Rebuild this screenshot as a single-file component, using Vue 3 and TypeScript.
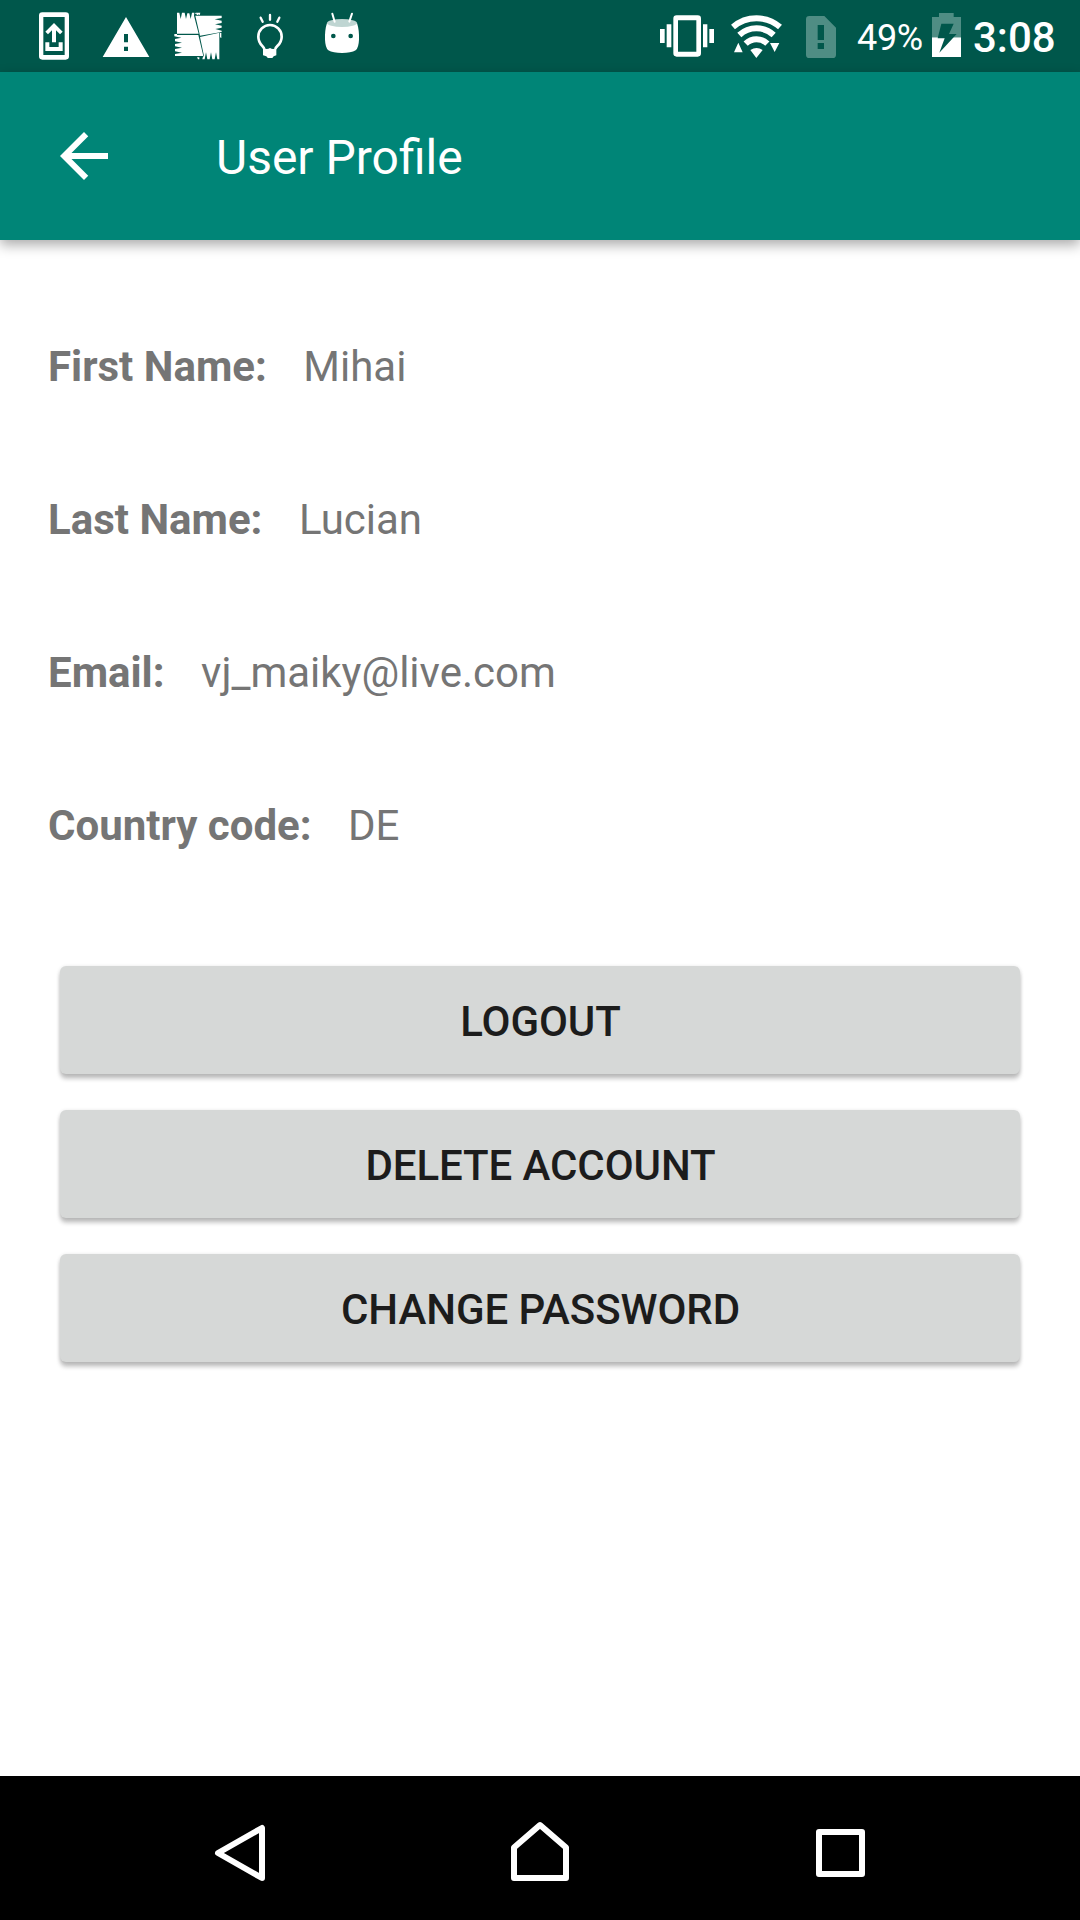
<script setup lang="ts">
interface Field {
  label: string
  value: string
}

const fields: Field[] = [
  { label: 'First Name:', value: 'Mihai' },
  { label: 'Last Name:', value: 'Lucian' },
  { label: 'Email:', value: 'vj_maiky@live.com' },
  { label: 'Country code:', value: 'DE' },
]

const actions: string[] = ['Logout', 'Delete account', 'Change password']
</script>

<template>
  <div class="screen">
    <div class="status">
      <div class="notifications">
        <!-- system update -->
        <svg width="72" height="72" viewBox="-6 0 216 216">
          <path fill="#fff" fill-rule="evenodd" d="M67 37H137Q147 37 147 47V169Q147 179 137 179H67Q57 179 57 169V47Q57 37 67 37ZM70 51V165H134V51Z" />
          <path fill="#fff" d="M102 69L128 95L120 103L108 91V127H96V91L84 103L76 95ZM76 127H88V141H116V127H128V153H76Z" />
        </svg>
        <!-- warning -->
        <svg width="72" height="72" viewBox="210 0 216 216">
          <path fill="#fff" fill-rule="evenodd" d="M318 51L388 171H248ZM312 102V127H324V102ZM312 140V153H324V140Z" />
        </svg>
        <!-- antivirus -->
        <svg width="72" height="72" viewBox="6 0 216 216">
          <g fill="#fff">
            <path d="M51 38H58L62 57L66 38H74L78 57L82 40H88L92 57L96 38H103L102 47L116 101H51Z" />
            <path d="M106 47H185V54L164 58L185 62V69L165 73L185 77V83L166 87L185 92V96L120 107ZM180 99H184V114L180 112ZM105 42L107 38H121L119 45H116V42L113 45H110V41Z" />
            <path d="M43 102H51V105H115L130 168H45V162L66 158L45 154V147L66 143L45 139V132L66 128L45 124V117L64 113L43 109Z" />
            <path d="M120 111L178 98V178H172L168 157L164 178H157L153 157L149 178H142L138 157L134 178H127L129 170L132 168ZM111 172H118V178H114Z" />
          </g>
        </svg>
        <!-- light bulb -->
        <svg width="72" height="72" viewBox="222 0 216 216">
          <path fill="none" stroke="#fff" stroke-width="8" d="M313 147C311 137 295 134 295 110A35 35 0 0 1 365 110C365 134 348 137 346 147" />
          <path fill="#fff" d="M309 143Q320 150 330 144Q340 150 349 143V166Q339 168 337 174H323Q321 168 309 166Z" />
          <path fill="none" stroke="#fff" stroke-width="7" stroke-linecap="round" d="M330 45V59M302 53L308 65M358 53L352 65" />
        </svg>
        <!-- android head -->
        <svg width="72" height="72" viewBox="438 0 216 216">
          <path fill="#fff" fill-rule="evenodd" d="M501 69Q546 88 591 69Q598 90 597 119Q596 143 587 151Q573 159 546 159Q519 159 505 151Q496 143 495 119Q494 90 501 69ZM513 108a7 7 0 1 0 14 0a7 7 0 1 0-14 0M565 108a7 7 0 1 0 14 0a7 7 0 1 0-14 0" />
          <ellipse cx="546" cy="69" rx="45" ry="12" fill="#bfd5d2" />
          <path fill="none" stroke="#fff" stroke-width="6" stroke-linecap="round" d="M517 41L524 65M576 41L568 65" />
        </svg>
      </div>
      <div class="system">
        <!-- vibrate -->
        <svg width="72" height="72" viewBox="33 0 216 216">
          <path fill="#fff" fill-rule="evenodd" d="M110 46H173Q183 46 183 56V160Q183 170 173 170H110Q100 170 100 160V56Q100 46 110 46ZM114 61V155H169V61ZM60 87H74V129H60ZM80 73H94V142H80ZM189 73H202V142H189ZM208 87H222V129H208Z" />
        </svg>
        <!-- wifi with traffic arrows -->
        <svg width="68" height="72" viewBox="249 0 204 216">
          <path fill="none" stroke="#fff" stroke-width="18" d="M279 81A108 108 0 0 1 420 81M298 105A76 76 0 0 1 401 105M317 131A47 47 0 0 1 382 131" />
          <path fill="#fff" d="M331 150Q350 138 368 150L349 174ZM295 128L308 157H282ZM390 129H418L404 156Z" />
        </svg>
        <!-- missing SIM -->
        <svg width="60" height="72" viewBox="453 0 180 216">
          <path fill="#4f8d84" fill-rule="evenodd" d="M508 48H553L588 83V164Q588 174 578 174H508Q498 174 498 164V58Q498 48 508 48ZM533 75V120H552V75ZM533 129V147H552V129Z" />
        </svg>
        <span class="percent">49%</span>
        <!-- charging battery -->
        <svg width="30" height="72" viewBox="276 0 90 216">
          <path fill="#4f8d84" d="M297 39H341V51H363V112H276V51H297Z" />
          <path fill="#fff" d="M276 112H363V171H276Z" />
          <path fill="#00574b" d="M304 71H341L327 102H350L298 158L314 115H293Z" />
        </svg>
        <span class="clock">3:08</span>
      </div>
    </div>

    <header class="appbar">
      <svg width="72" height="72" viewBox="0 0 24 24">
        <path fill="#fff" d="M20 11H7.83l5.59-5.59L12 4l-8 8 8 8 1.41-1.41L7.83 13H20v-2z" />
      </svg>
      <h1>User Profile</h1>
    </header>

    <main class="content">
      <div v-for="field in fields" :key="field.label" class="field">
        <span class="label">{{ field.label }}</span>
        <span class="value">{{ field.value }}</span>
      </div>
      <div class="actions">
        <button v-for="action in actions" :key="action" type="button">{{ action }}</button>
      </div>
    </main>

    <nav class="navbar">
      <svg width="1080" height="144" viewBox="0 1776 1080 144">
        <g fill="none" stroke="#fff" stroke-width="6" stroke-linejoin="round">
          <path d="M218 1853L262 1828V1878Z" />
          <path d="M514 1878V1847.500L540 1825L566 1847.500V1878Z" />
          <path d="M819 1832H862V1874H819Z" />
        </g>
      </svg>
    </nav>
  </div>
</template>

<style>
body {
  margin: 0;
}
</style>

<style scoped>
.screen {
  display: flex;
  flex-direction: column;
  width: 1080px;
  height: 1920px;
  overflow: hidden;
  background: #fff;
  font-family: Roboto, "Liberation Sans", sans-serif;
}

svg {
  display: block;
  flex: none;
}

.status {
  display: flex;
  justify-content: space-between;
  height: 72px;
  flex: none;
  background: #00574b;
  color: #fff;
}

.notifications {
  display: flex;
  padding-left: 18px;
}

.system {
  display: flex;
  width: 429px;
}

.percent {
  width: 75px;
  padding-left: 6px;
  font-size: 36px;
  letter-spacing: -0.3px;
  line-height: 76px;
  white-space: nowrap;
}

.clock {
  padding-left: 11px;
  font-size: 42px;
  font-weight: 500;
  line-height: 75px;
  white-space: nowrap;
}

.appbar {
  position: relative;
  display: flex;
  align-items: center;
  gap: 96px;
  height: 168px;
  flex: none;
  padding-left: 48px;
  box-sizing: border-box;
  background: #008577;
  box-shadow: 0 5px 12px rgba(0, 0, 0, 0.33);
}

.appbar h1 {
  margin: 0;
  padding-top: 4px;
  color: #fff;
  font-size: 48px;
  font-weight: 400;
  line-height: 56px;
}

.content {
  flex: 1;
  padding: 50px 48px 0;
}

.field {
  display: flex;
  align-items: center;
  gap: 36.5px;
  height: 153px;
  color: #757575;
  font-size: 42px;
  line-height: 50px;
}

.label {
  font-weight: 700;
}

.actions {
  display: flex;
  flex-direction: column;
  gap: 36px;
  padding: 64px 12px 0;
}

.actions button {
  height: 108px;
  padding: 3px 0 0 1px;
  border: 0;
  border-radius: 6px;
  background: #d6d8d7;
  box-shadow: 0 5px 4px rgba(0, 0, 0, 0.21), 0 1px 4px rgba(0, 0, 0, 0.14);
  color: #1c1c1c;
  font-family: inherit;
  font-size: 42px;
  font-weight: 500;
  letter-spacing: -0.08px;
  line-height: 50px;
  text-transform: uppercase;
}

.navbar {
  height: 144px;
  flex: none;
  background: #000;
}
</style>
